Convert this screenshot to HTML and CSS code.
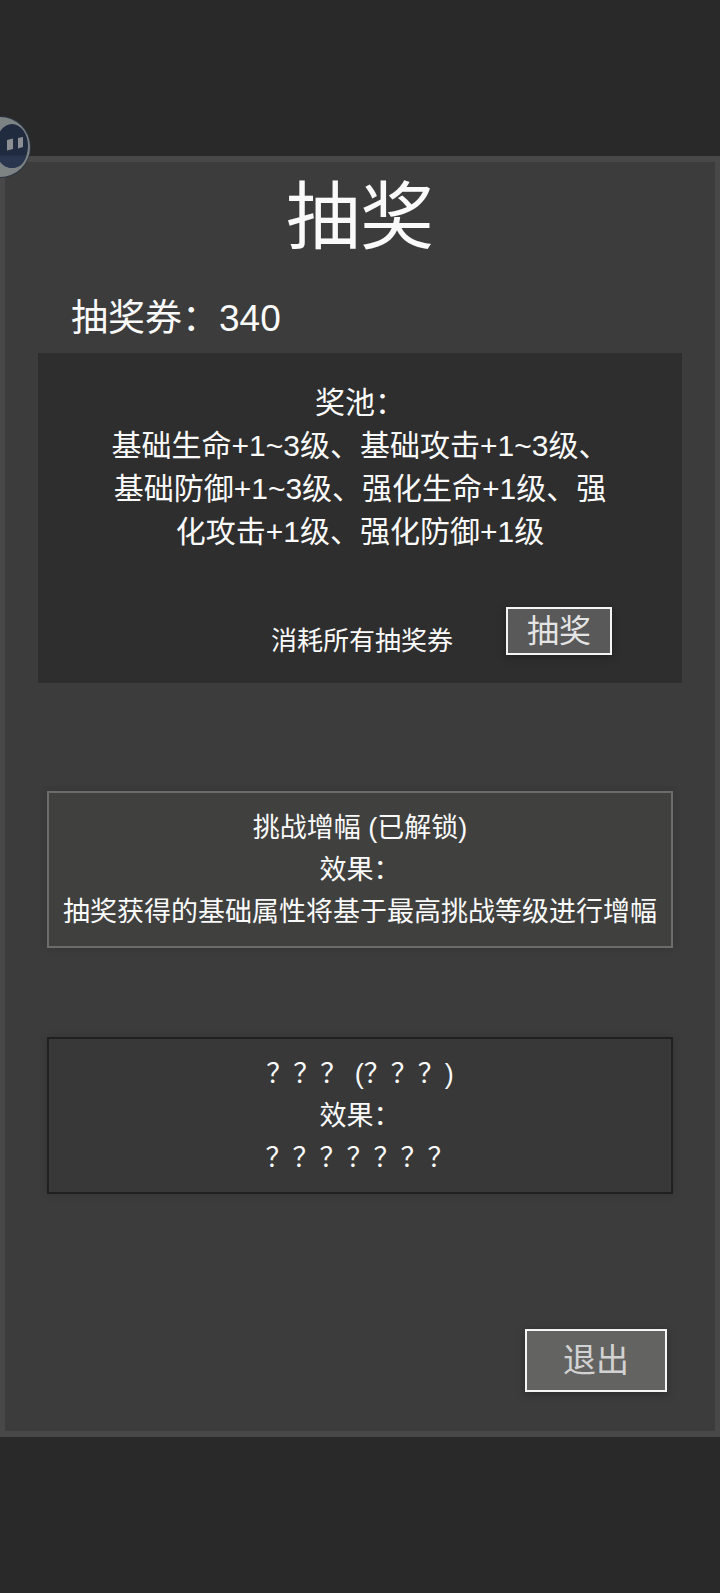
FILE: index.html
```html
<!DOCTYPE html>
<html lang="zh-CN">
<head>
<meta charset="utf-8">
<meta name="viewport" content="width=device-width, initial-scale=1">
<title>抽奖</title>
<link rel="stylesheet" href="styles.css">
</head>
<body>
<main class="panel">
  <h1 class="title">抽奖</h1>
  <p class="tickets">抽奖券：340</p>

  <section class="pool">
    <div class="pool-text">
      <p>奖池：</p>
      <p>基础生命+1~3级、基础攻击+1~3级、基础防御+1~3级、强化生命+1级、强化攻击+1级、强化防御+1级</p>
    </div>
    <div class="pool-action">
      <span class="cost">消耗所有抽奖券</span>
      <button class="button draw" type="button">抽奖</button>
    </div>
  </section>

  <section class="perks">
    <article class="perk unlocked">
      <p>挑战增幅 (已解锁)</p>
      <p>效果：</p>
      <p>抽奖获得的基础属性将基于最高挑战等级进行增幅</p>
    </article>
    <article class="perk locked">
      <p>？？？ (？？？)</p>
      <p>效果：</p>
      <p>？？？？？？？</p>
    </article>
  </section>

  <footer class="footer">
    <button class="button exit" type="button">退出</button>
  </footer>
</main>

<svg class="mascot" viewBox="0 0 32 64" aria-hidden="true">
  <circle cx="0" cy="32" r="31" fill="#2b3644"/>
  <circle cx="0" cy="32" r="30" fill="#7d8283"/>
  <ellipse cx="12" cy="31" rx="16" ry="22" fill="#212b40"/>
  <path d="M-3 40.500H26.500Q23 53 12 53Q1 53 -3 40.500Z" fill="#2a364e"/>
  <path d="M7 25L13 23.500V34L7 35.500Z" fill="#8b8f94"/>
  <path d="M18 23L23 22V32L18 33.500Z" fill="#8b8f94"/>
</svg>
</body>
</html>
```
FILE: styles.css
```css
* {
  box-sizing: border-box;
}

body {
  margin: 0;
  min-height: 100vh;
  display: flex;
  flex-direction: column;
  justify-content: center;
  background: #292929;
  color: #fafafa;
  font-family: "Liberation Sans", "Noto Sans CJK SC", sans-serif;
}

p,
h1 {
  margin: 0;
  font-weight: 400;
}

.panel {
  display: flex;
  flex-direction: column;
  padding: 2px 33px 39px;
  background: #3c3c3c;
  border: solid #484848;
  border-width: 6px 5px;
}

.title {
  font-size: 74px;
  line-height: 108px;
  text-align: center;
}

.tickets {
  padding: 19px 0 6px 33px;
  font-size: 37px;
  line-height: 56px;
}

.pool {
  display: flex;
  flex-direction: column;
  gap: 54px;
  padding: 28px 67px;
  background: #2e2e2e;
}

.pool-text {
  font-size: 30px;
  line-height: 43px;
  text-align: center;
}

.pool-action {
  display: flex;
  justify-content: flex-end;
  align-items: center;
  gap: 53px;
  padding-right: 3px;
}

.cost {
  padding-top: 20px;
  font-size: 26px;
  line-height: 28px;
}

.button {
  display: flex;
  justify-content: center;
  border: 2px solid #f4f4f4;
  font-family: inherit;
  box-shadow: 0 2px 8px rgba(0, 0, 0, 0.3);
}

.draw {
  padding: 0 19px;
  background: #595959;
  color: #e4e4e4;
  font-size: 32px;
  line-height: 44px;
}

.exit {
  padding: 4px 36px;
  background: #636361;
  color: #d2d2d2;
  font-size: 33px;
  line-height: 51px;
}

.perks {
  display: flex;
  flex-direction: column;
  gap: 89px;
  padding: 108px 9px 0;
}

.perk {
  padding: 14px 8px 13px;
  border: 2px solid;
  font-size: 27px;
  line-height: 42px;
  text-align: center;
  box-shadow: 0 0 8px rgba(0, 0, 0, 0.15);
}

.unlocked {
  background: #40403e;
  border-color: #6c6c69;
}

.locked {
  background: #383838;
  border-color: #202020;
}

.footer {
  display: flex;
  justify-content: flex-end;
  padding: 135px 15px 0 0;
}

.mascot {
  position: absolute;
  top: 115px;
  left: 0;
  width: 32px;
  height: 64px;
}
```
